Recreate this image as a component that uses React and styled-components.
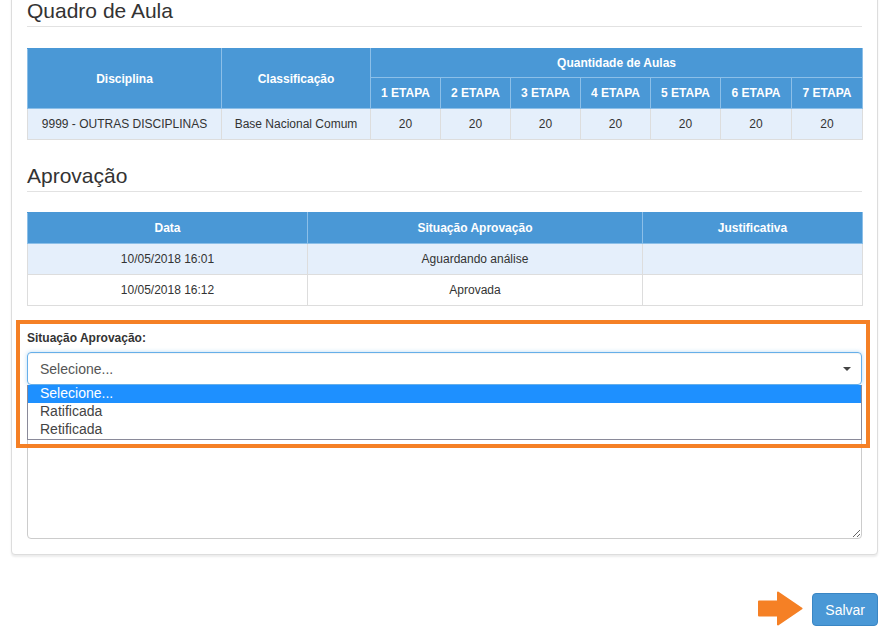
import styled, { createGlobalStyle } from 'styled-components';

const GlobalStyle = createGlobalStyle`
  body {
    margin: 0;
    background: #fff;
    font-family: "Liberation Sans", Arial, sans-serif;
    font-size: 12px;
    color: #333;
  }
`;

const etapas = ['1 ETAPA', '2 ETAPA', '3 ETAPA', '4 ETAPA', '5 ETAPA', '6 ETAPA', '7 ETAPA'];

const aprovacoes = [
  { data: '10/05/2018 16:01', situacao: 'Aguardando análise', justificativa: '' },
  { data: '10/05/2018 16:12', situacao: 'Aprovada', justificativa: '' },
];

const opcoes = ['Selecione...', 'Ratificada', 'Retificada'];

const App = () => {
  return (
    <Page>
      <GlobalStyle />
      <Panel>
        <SectionTitle>Quadro de Aula</SectionTitle>
        <Table>
          <colgroup>
            <col style={{ width: 194 }} />
            <col style={{ width: 149 }} />
            {etapas.map((e, i) => (
              <col key={e} style={{ width: i > 4 ? 71 : 70 }} />
            ))}
          </colgroup>
          <thead>
            <tr>
              <Th rowSpan={2}>Disciplina</Th>
              <Th rowSpan={2}>Classificação</Th>
              <Th colSpan={7} $short>
                Quantidade de Aulas
              </Th>
            </tr>
            <tr>
              {etapas.map((e) => (
                <Th key={e}>{e}</Th>
              ))}
            </tr>
          </thead>
          <tbody>
            <Row $striped>
              <Td>9999 - OUTRAS DISCIPLINAS</Td>
              <Td>Base Nacional Comum</Td>
              {etapas.map((e) => (
                <Td key={e}>20</Td>
              ))}
            </Row>
          </tbody>
        </Table>

        <SectionTitle $spaced>Aprovação</SectionTitle>
        <Table>
          <colgroup>
            <col style={{ width: 280 }} />
            <col style={{ width: 335 }} />
            <col style={{ width: 220 }} />
          </colgroup>
          <thead>
            <tr>
              <Th>Data</Th>
              <Th>Situação Aprovação</Th>
              <Th>Justificativa</Th>
            </tr>
          </thead>
          <tbody>
            {aprovacoes.map((a, i) => (
              <Row key={a.data} $striped={i % 2 === 0}>
                <Td>{a.data}</Td>
                <Td>{a.situacao}</Td>
                <Td>{a.justificativa}</Td>
              </Row>
            ))}
          </tbody>
        </Table>

        <FormGroup>
          <Label>Situação Aprovação:</Label>
          <SelectBox>
            <span>Selecione...</span>
            <Caret />
            <OptionList>
              {opcoes.map((o, i) => (
                <Option key={o} $active={i === 0}>
                  {o}
                </Option>
              ))}
            </OptionList>
          </SelectBox>
          <TextArea />
          <Highlight />
        </FormGroup>
      </Panel>

      <Footer>
        <Arrow width="46" height="35" viewBox="0 0 46 35">
          <path
            d="M2 10.5 H21 V1.5 L44.5 17.5 L21 33.5 V24.5 H2 Z"
            fill="#f58025"
            stroke="#f58025"
            strokeWidth="2"
            strokeLinejoin="round"
          />
        </Arrow>
        <Button>Salvar</Button>
      </Footer>
    </Page>
  );
};

const Page = styled.div`
  padding: 0 8px 0 11px;
  overflow: hidden;
  height: 632px;
  box-sizing: border-box;
`;

const Panel = styled.div`
  margin-top: -20px;
  padding: 18px 15px 15px 15px;
  background: #fff;
  border: 1px solid #ddd;
  border-radius: 4px;
  box-shadow: 0 2px 2px rgba(0, 0, 0, 0.08);
`;

const SectionTitle = styled.h3`
  margin: ${({ $spaced }) => ($spaced ? '24px 0 20px' : '0 0 21px')};
  padding-bottom: 4px;
  border-bottom: 1px solid #e2e2e2;
  font-size: 21px;
  line-height: 23px;
  font-weight: 400;
  color: #333;
`;

const Table = styled.table`
  width: 100%;
  table-layout: fixed;
  border-collapse: collapse;
  border: 1px solid #ddd;
`;

const Th = styled.th`
  background: #4a98d6;
  color: #fff;
  font-weight: 700;
  font-size: 12px;
  line-height: 14px;
  padding: ${({ $short }) => ($short ? '7px 4px' : '8px 4px')};
  text-align: center;
  vertical-align: middle;
  border: 1px solid #8cbfe8;
  border-top-color: #4a98d6;
  white-space: nowrap;
`;

const Row = styled.tr`
  background: ${({ $striped }) => ($striped ? '#e5effb' : '#fff')};
`;

const Td = styled.td`
  padding: 8px 4px;
  line-height: 14px;
  height: 14px;
  text-align: center;
  border: 1px solid #ddd;
  color: #333;
  white-space: nowrap;
`;

const FormGroup = styled.div`
  position: relative;
  margin-top: 24px;
`;

const Label = styled.label`
  display: block;
  font-weight: 700;
  font-size: 12px;
  line-height: 17px;
  margin-bottom: 5px;
  color: #333;
`;

const SelectBox = styled.div`
  position: relative;
  height: 33px;
  box-sizing: border-box;
  display: flex;
  align-items: center;
  padding: 0 12px;
  border: 1px solid #66afe9;
  border-radius: 4px;
  box-shadow: inset 0 1px 1px rgba(0, 0, 0, 0.05), 0 0 4px rgba(102, 175, 233, 0.45);
  font-size: 14px;
  color: #555;
`;

const Caret = styled.span`
  margin-left: auto;
  margin-right: -2px;
  width: 0;
  height: 0;
  border-left: 4px solid transparent;
  border-right: 4px solid transparent;
  border-top: 4px solid #444;
`;

const OptionList = styled.ul`
  position: absolute;
  top: 32px;
  left: -1px;
  right: -1px;
  margin: 0;
  padding: 0;
  list-style: none;
  background: #fff;
  border: 1px solid #8a8a99;
  border-top: none;
  z-index: 2;
`;

const Option = styled.li`
  height: 18px;
  line-height: 17px;
  padding: 0 12px;
  font-size: 14px;
  background: ${({ $active }) => ($active ? '#1e90ff' : '#fff')};
  color: ${({ $active }) => ($active ? '#fff' : '#444')};
`;

const TextArea = styled.textarea`
  display: block;
  width: 100%;
  box-sizing: border-box;
  height: 139px;
  margin-top: 15px;
  border: 1px solid #ccc;
  border-radius: 4px;
  resize: vertical;
  font-family: inherit;
`;

const Highlight = styled.div`
  position: absolute;
  top: -10px;
  left: -11px;
  right: -8px;
  height: 128px;
  box-sizing: border-box;
  border: 4px solid #f58025;
  pointer-events: none;
  z-index: 3;
`;

const Footer = styled.div`
  display: flex;
  justify-content: flex-end;
  align-items: flex-end;
  gap: 9px;
  margin-top: 36px;
`;

const Arrow = styled.svg`
  display: block;
  margin-bottom: 0;
`;

const Button = styled.button`
  height: 33px;
  padding: 0 12px;
  font-family: inherit;
  font-size: 14px;
  color: #fff;
  background: #4a98d6;
  border: 1px solid #3a86c4;
  border-radius: 4px;
`;

export default App;
